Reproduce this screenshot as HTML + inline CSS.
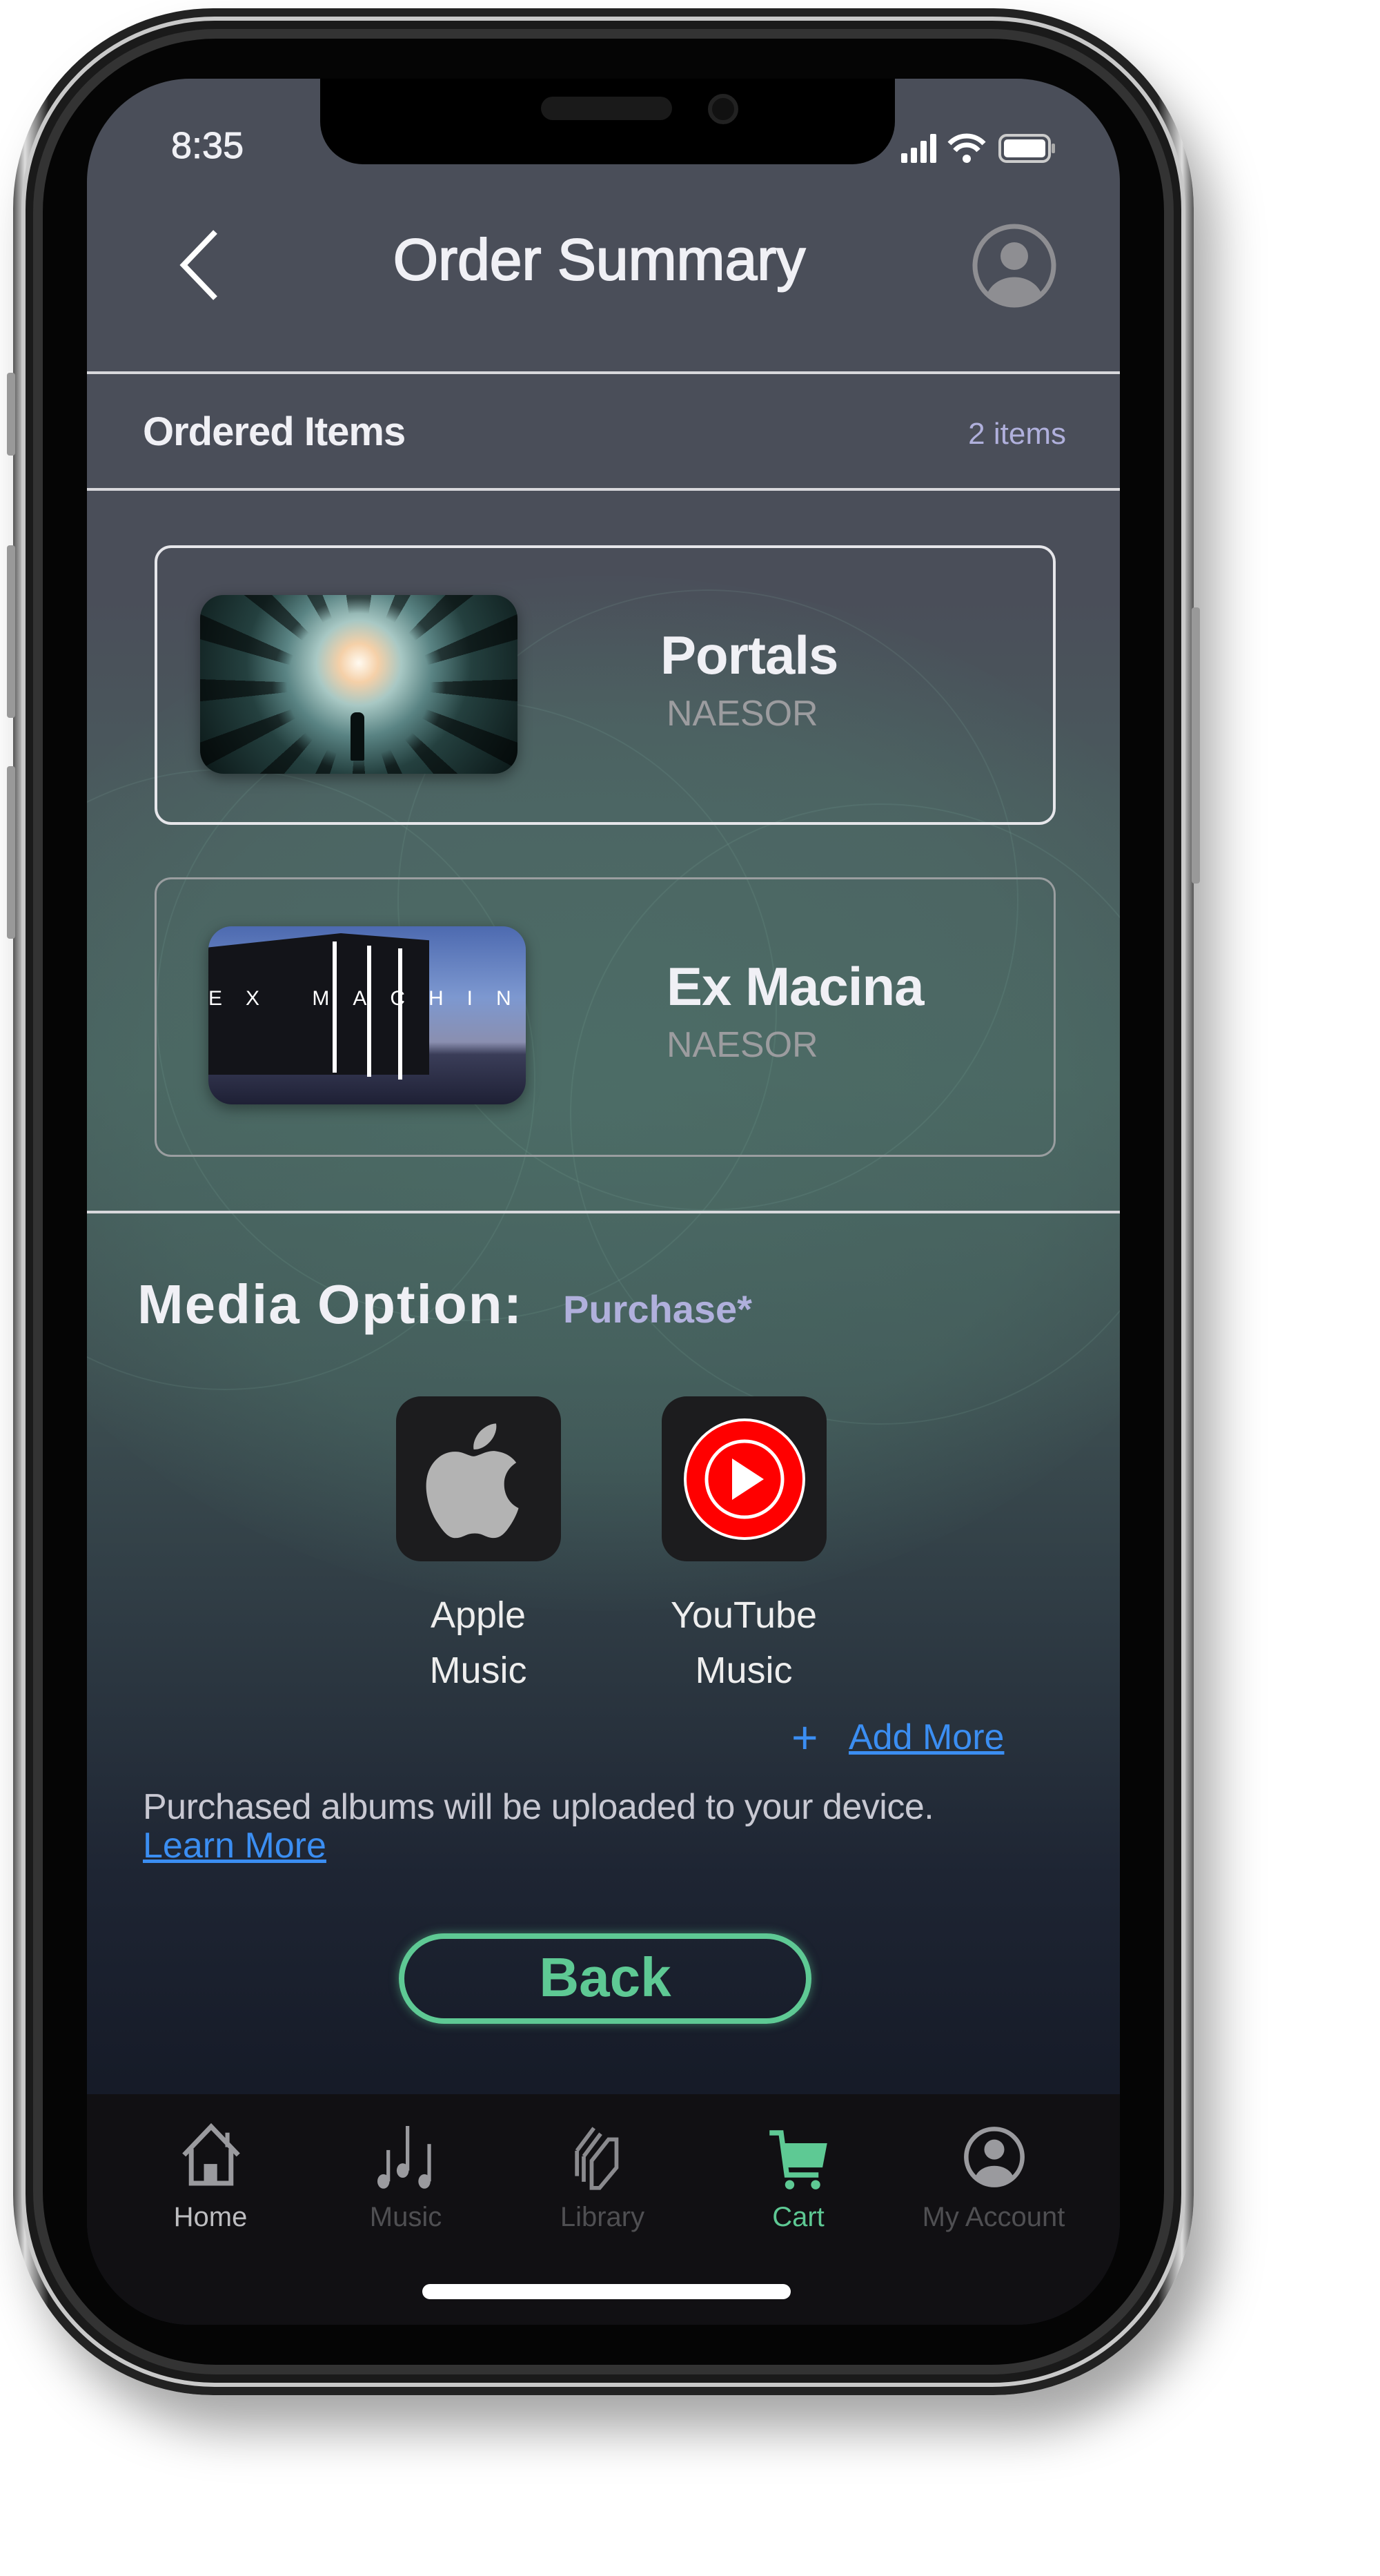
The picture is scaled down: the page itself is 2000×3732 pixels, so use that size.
<!DOCTYPE html>
<html><head><meta charset="utf-8">
<style>
*{margin:0;padding:0;box-sizing:border-box}
body{width:2000px;height:3732px;background:#fff;position:relative;overflow:hidden;font-family:"Liberation Sans",sans-serif}
.abs{position:absolute}
.phone{left:19px;top:12px;width:1711px;height:3458px;border-radius:290px;background:linear-gradient(90deg,#555 0%,#ddd 1%,#888 2%,#222 3%,#222 97%,#888 98%,#ddd 99%,#555 100%);box-shadow:30px 50px 70px rgba(0,0,0,.35)}
.ring{left:31px;top:24px;width:1687px;height:3434px;border-radius:280px;background:#1a1a1a;border:6px solid #c9c9c9}
.inner{left:48px;top:42px;width:1653px;height:3398px;border-radius:265px;background:#050505;border:14px solid #333}
.screen{left:126px;top:114px;width:1497px;height:3254px;border-radius:150px;overflow:hidden;
background:linear-gradient(180deg,#4a4e59 0px,#4a4e59 750px,#4a5a5d 1050px,#485f5d 1450px,#3f5153 1850px,#2e3a43 2250px,#1e2533 2600px,#161b28 2900px,#161b28 100%)}
.blob{border-radius:50%;border:2px solid rgba(140,190,170,.12)}
.txt{color:#f0f0f5;white-space:nowrap}
.line{height:4px;background:#d8d8dc;left:0;width:1497px}
</style></head><body>
<div class="abs phone"></div>
<div class="abs ring"></div>
<div class="abs inner"></div>
<div class="abs" style="left:10px;top:540px;width:12px;height:120px;background:#999;border-radius:4px"></div>
<div class="abs" style="left:10px;top:790px;width:12px;height:250px;background:#999;border-radius:4px"></div>
<div class="abs" style="left:10px;top:1110px;width:12px;height:250px;background:#999;border-radius:4px"></div>
<div class="abs" style="left:1727px;top:880px;width:12px;height:400px;background:#999;border-radius:4px"></div>

<div class="abs screen">
  <div class="abs" style="left:-200px;top:720px;width:1900px;height:1500px;border-radius:50%;background:radial-gradient(ellipse at 50% 50%,rgba(80,120,110,.55) 0%,rgba(80,120,110,.35) 50%,rgba(80,120,110,0) 72%)"></div>
  <div class="abs blob" style="left:450px;top:740px;width:900px;height:900px"></div>
  <div class="abs blob" style="left:100px;top:900px;width:900px;height:900px"></div>
  <div class="abs blob" style="left:700px;top:1050px;width:900px;height:900px"></div>
  <div class="abs blob" style="left:-250px;top:1000px;width:900px;height:900px"></div>

  <div class="abs txt" style="left:122px;top:66px;font-size:54px;-webkit-text-stroke:1px #f0f0f5">8:35</div>
  <svg class="abs" style="left:1180px;top:76px" width="230" height="50" viewBox="0 0 230 50">
    <rect x="0" y="32" width="9" height="14" rx="2" fill="#fff"/><rect x="14" y="24" width="9" height="22" rx="2" fill="#fff"/><rect x="28" y="14" width="9" height="32" rx="2" fill="#fff"/><rect x="42" y="4" width="9" height="42" rx="2" fill="#fff"/>
    <path d="M70 18a34 34 0 0 1 50 0" stroke="#fff" stroke-width="7" fill="none"/><path d="M78 28a22 22 0 0 1 34 0" stroke="#fff" stroke-width="7" fill="none"/><circle cx="95" cy="40" r="6" fill="#fff"/>
    <rect x="143" y="6" width="72" height="38" rx="10" stroke="#ccc" stroke-width="4" fill="none"/><rect x="149" y="12" width="60" height="26" rx="5" fill="#fff"/><rect x="218" y="18" width="5" height="14" rx="2" fill="#aaa"/>
  </svg>
  <div class="abs" style="left:338px;top:0;width:833px;height:124px;background:#000;border-radius:0 0 62px 62px"></div>
  <div class="abs" style="left:658px;top:26px;width:190px;height:34px;background:#1a1a1a;border-radius:17px"></div>
  <div class="abs" style="left:900px;top:22px;width:44px;height:44px;background:#111;border-radius:50%;border:6px solid #222"></div>

  <svg class="abs" style="left:128px;top:218px" width="70" height="105"><path d="M58 4 L12 52 L58 100" stroke="#fff" stroke-width="8" fill="none"/></svg>
  <div class="abs txt" style="left:0;width:1497px;text-align:center;top:214px;font-size:84px;-webkit-text-stroke:2px #f0f0f5;transform:translateX(-6px)">Order Summary</div>
  <svg class="abs" style="left:1282px;top:209px" width="124" height="124" viewBox="0 0 124 124">
    <circle cx="62" cy="62" r="57" stroke="#8e8e92" stroke-width="7" fill="none"/>
    <circle cx="62" cy="48" r="20" fill="#8e8e92"/><path d="M22 104 C35 70 89 70 102 104 A57 57 0 0 1 22 104Z" fill="#8e8e92"/>
  </svg>
  <div class="abs line" style="top:424px"></div>
  <div class="abs txt" style="left:81px;top:478px;font-size:58px;font-weight:bold;letter-spacing:-1px">Ordered Items</div>
  <div class="abs" style="right:78px;top:490px;font-size:44px;color:#b0b0dc">2 items</div>
  <div class="abs line" style="top:593px"></div>

  <div class="abs" style="left:98px;top:676px;width:1306px;height:405px;border:4px solid #e6e6ea;border-radius:24px"></div>
  <div class="abs" style="left:164px;top:748px;width:460px;height:259px;border-radius:34px;overflow:hidden;background:radial-gradient(circle at 50% 38%,#fffaf0 0%,#f5d0a8 10%,#a8c8c4 22%,#5a8484 38%,#24403f 58%,#0a1616 100%);box-shadow:0 6px 20px rgba(0,0,0,.4)">
    <div class="abs" style="left:-60px;top:-100px;width:580px;height:460px;border-radius:50%;background:repeating-conic-gradient(from 0deg at 50% 50%,rgba(0,0,0,.55) 0deg 8deg,rgba(0,0,0,0) 8deg 22deg);-webkit-mask:radial-gradient(circle,transparent 28%,#000 34%)"></div>
    <div class="abs" style="left:218px;top:170px;width:20px;height:70px;background:#081010;border-radius:8px 8px 2px 2px"></div>
  </div>
  <div class="abs txt" style="left:831px;top:790px;font-size:78px;font-weight:bold;letter-spacing:-1px">Portals</div>
  <div class="abs" style="left:840px;top:890px;font-size:52px;color:#9c9c9f">NAESOR</div>

  <div class="abs" style="left:98px;top:1157px;width:1306px;height:405px;border:3px solid #9a9ea0;border-radius:24px"></div>
  <div class="abs" style="left:176px;top:1228px;width:460px;height:258px;border-radius:34px;overflow:hidden;background:linear-gradient(180deg,#4d6ab0 0%,#7d98d0 40%,#8a8fb0 65%,#3a3d58 72%,#1e2035 100%);box-shadow:0 6px 20px rgba(0,0,0,.4)">
    <div class="abs" style="left:0;top:10px;width:320px;height:205px;background:#131419;clip-path:polygon(0 10%,60% 0,100% 5%,100% 100%,0 100%)"></div>
    <div class="abs" style="left:180px;top:22px;width:6px;height:190px;background:#fff"></div>
    <div class="abs" style="left:230px;top:28px;width:6px;height:190px;background:#fff"></div>
    <div class="abs" style="left:275px;top:32px;width:6px;height:190px;background:#fff"></div>
    <div class="abs" style="left:0;top:88px;width:460px;font-size:30px;color:#fff;letter-spacing:34px;white-space:nowrap">EX MACHINA</div>
  </div>
  <div class="abs txt" style="left:840px;top:1270px;font-size:78px;font-weight:bold;letter-spacing:-1px">Ex Macina</div>
  <div class="abs" style="left:840px;top:1370px;font-size:52px;color:#9c9c9f">NAESOR</div>

  <div class="abs line" style="top:1640px"></div>

  <div class="abs txt" style="left:73px;top:1730px;font-size:80px;font-weight:bold;letter-spacing:2px">Media Option:</div>
  <div class="abs" style="left:690px;top:1750px;font-size:56px;font-weight:bold;color:#b0b0dc">Purchase*</div>

  <div class="abs" style="left:448px;top:1909px;width:239px;height:239px;border-radius:36px;background:#1c1c1e"></div>
  <svg class="abs" style="left:468px;top:1930px" width="200" height="200" viewBox="0 0 24 24"><path fill="#b3b3b3" d="M16.4 12.7c0-2.5 2-3.6 2.1-3.7-1.2-1.7-3-1.9-3.6-2-1.5-.2-3 .9-3.8.9-.8 0-2-.9-3.3-.8-1.7 0-3.200 1-4.100 2.5-1.8 3-.5 7.6 1.200 10 .8 1.200 1.800 2.600 3.100 2.500 1.300 0 1.700-.8 3.300-.8 1.500 0 1.900.8 3.300.8 1.400 0 2.200-1.200 3-2.400.9-1.400 1.300-2.700 1.300-2.800 0 0-2.500-1-2.500-4.200zM14 5.3c.7-.8 1.200-2 1-3.100-1 0-2.200.7-2.900 1.500-.6.7-1.200 1.900-1 3 1.100.1 2.200-.6 2.900-1.400z"/></svg>

  <div class="abs" style="left:833px;top:1909px;width:239px;height:239px;border-radius:36px;background:#1c1c1e"></div>
  <svg class="abs" style="left:863px;top:1939px" width="180" height="180" viewBox="0 0 180 180">
    <circle cx="90" cy="90" r="88" fill="#fff"/><circle cx="90" cy="90" r="84" fill="#f00"/>
    <circle cx="90" cy="90" r="55" fill="none" stroke="#fff" stroke-width="5"/>
    <path d="M72 60 L118 90 L72 120Z" fill="#fff"/>
  </svg>

  <div class="abs txt" style="left:447px;width:240px;text-align:center;top:2186px;font-size:54px;line-height:80px;color:#eee">Apple<br>Music</div>
  <div class="abs txt" style="left:802px;width:300px;text-align:center;top:2186px;font-size:54px;line-height:80px;color:#eee">YouTube<br>Music</div>

  <div class="abs" style="left:1021px;top:2370px;font-size:66px;color:#3b8ef2;line-height:66px">+</div>
  <div class="abs" style="left:1104px;top:2373px;font-size:52px;color:#3b8ef2;text-decoration:underline">Add More</div>

  <div class="abs" style="left:81px;top:2474px;font-size:52px;color:#c8c8d2;white-space:nowrap;letter-spacing:-0.5px">Purchased albums will be uploaded to your device.</div>
  <div class="abs" style="left:81px;top:2530px;font-size:52px;color:#3b8ef2;text-decoration:underline">Learn More</div>

  <div class="abs" style="left:452px;top:2687px;width:598px;height:131px;border:8px solid #5ec994;border-radius:66px;box-shadow:0 0 14px rgba(94,201,148,.5);text-align:center;font-size:80px;font-weight:bold;color:#5ec994;line-height:112px">Back</div>

  <div class="abs" style="left:0;top:2920px;width:1497px;height:334px;background:#111013"></div>
  <svg class="abs" style="left:132px;top:2960px" width="96" height="96" viewBox="0 0 110 110">
    <path d="M10 55 L55 8 L100 55 M22 45 V102 H88 V45" stroke="#9a9a9e" stroke-width="8" fill="none"/><rect x="43" y="70" width="22" height="32" fill="#9a9a9e"/><path d="M82 18 V42" stroke="#9a9a9e" stroke-width="7"/>
  </svg>
  <svg class="abs" style="left:414px;top:2966px" width="96" height="96" viewBox="0 0 110 110">
    <g fill="#9a9a9e"><ellipse cx="18" cy="92" rx="10" ry="12"/><rect x="23" y="40" width="6" height="52"/><ellipse cx="50" cy="74" rx="10" ry="12"/><rect x="55" y="0" width="6" height="74"/><ellipse cx="86" cy="92" rx="10" ry="12"/><rect x="91" y="30" width="6" height="62"/></g>
  </svg>
  <svg class="abs" style="left:702px;top:2960px" width="90" height="100" viewBox="0 0 110 120">
    <g stroke="#8a8a8e" stroke-width="7" fill="none"><path d="M10 50 L40 10 M10 50 V95"/><path d="M22 60 L52 20 M22 60 V105"/><path d="M36 68 L66 30 H80 V80 L50 116 H36 Z"/></g>
  </svg>
  <svg class="abs" style="left:983px;top:2966px" width="96" height="96" viewBox="0 0 110 115">
    <path d="M5 12 H25 L35 85 H90" stroke="#5ec994" stroke-width="9" fill="none"/><path d="M28 30 H105 L97 72 H34Z" fill="#5ec994"/><circle cx="40" cy="102" r="8" fill="#5ec994"/><circle cx="85" cy="102" r="8" fill="#5ec994"/>
  </svg>
  <svg class="abs" style="left:1270px;top:2966px" width="90" height="90" viewBox="0 0 124 124">
    <circle cx="62" cy="62" r="56" stroke="#9a9a9e" stroke-width="9" fill="none"/>
    <circle cx="62" cy="47" r="20" fill="#9a9a9e"/><path d="M24 102 C35 72 89 72 100 102 A56 56 0 0 1 24 102Z" fill="#9a9a9e"/>
  </svg>
  <div class="abs" style="left:104px;width:150px;text-align:center;top:3076px;font-size:40px;color:#bdbdc0">Home</div>
  <div class="abs" style="left:387px;width:150px;text-align:center;top:3076px;font-size:40px;color:#4f4f52">Music</div>
  <div class="abs" style="left:667px;width:160px;text-align:center;top:3076px;font-size:40px;color:#4f4f52">Library</div>
  <div class="abs" style="left:956px;width:150px;text-align:center;top:3076px;font-size:40px;color:#5ec994">Cart</div>
  <div class="abs" style="left:1184px;width:260px;text-align:center;top:3076px;font-size:40px;color:#4f4f52">My Account</div>
  <div class="abs" style="left:486px;top:3195px;width:534px;height:22px;border-radius:11px;background:#fff"></div>
</div>
</body></html>
